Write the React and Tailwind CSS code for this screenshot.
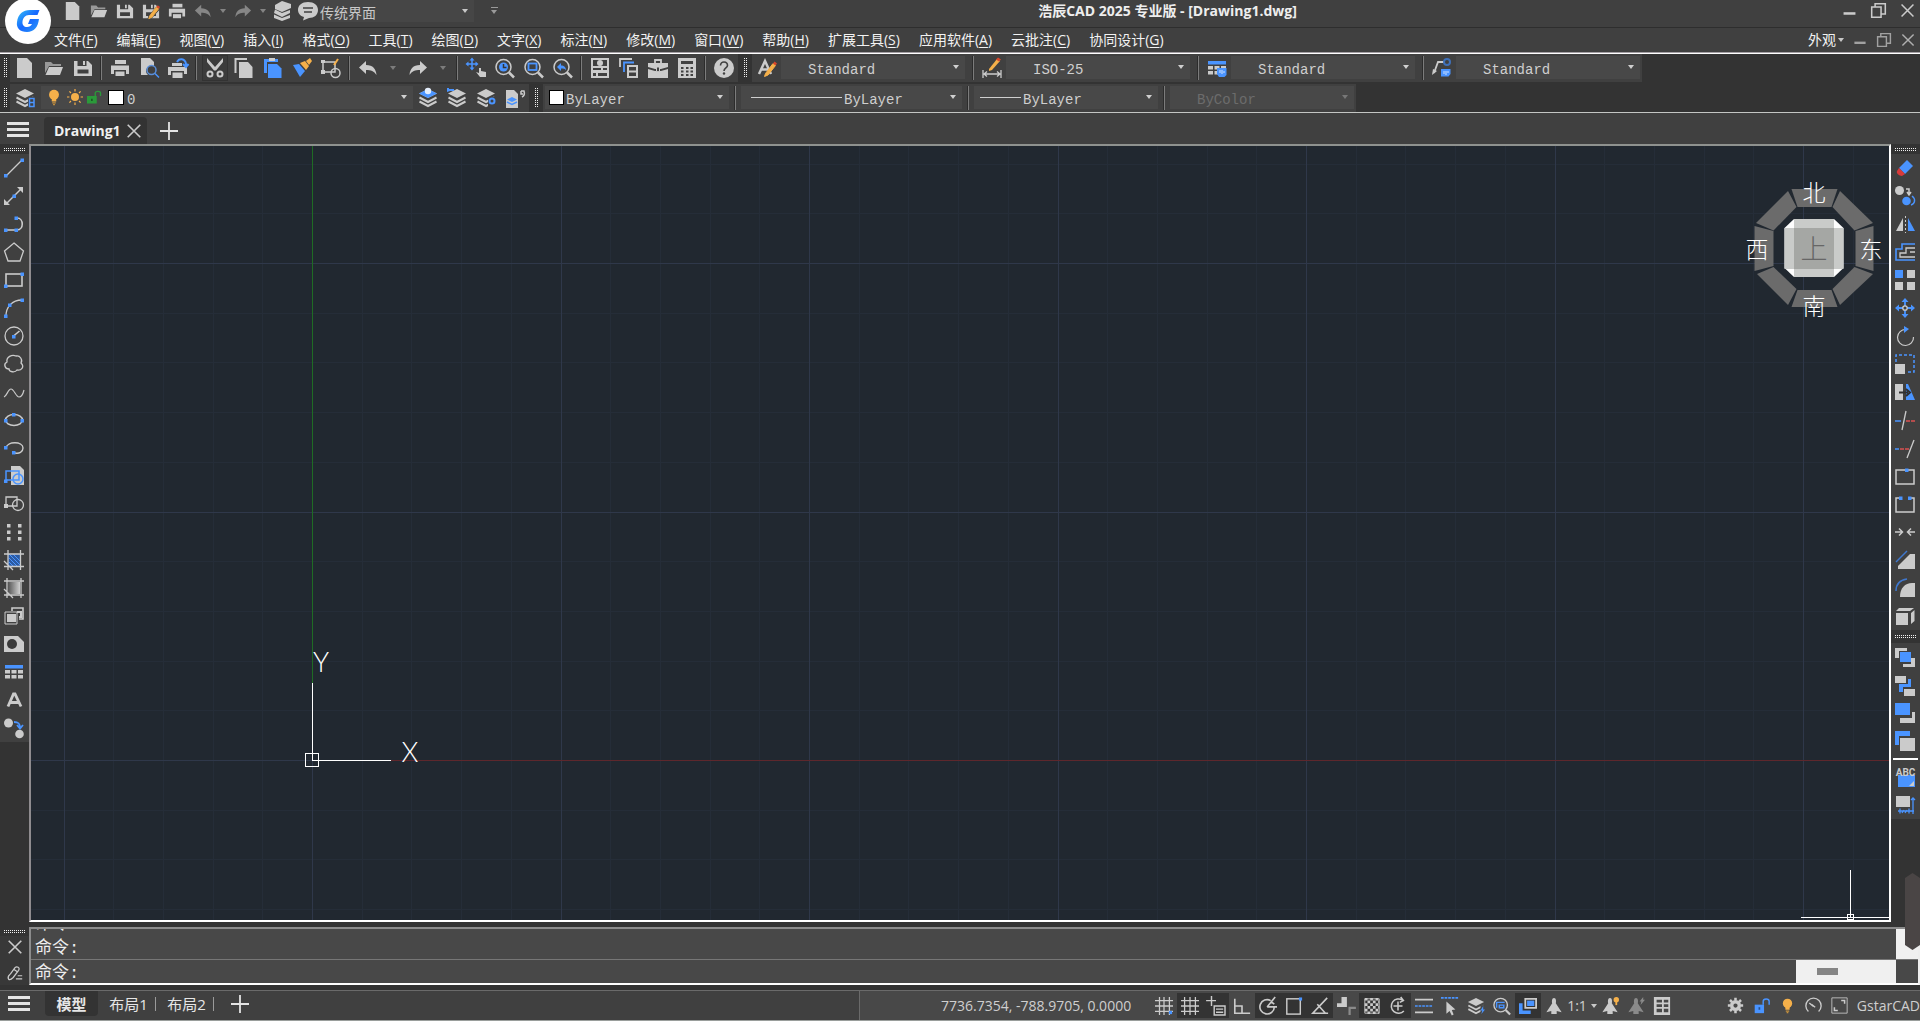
import { useState } from 'react';

const G = '#cbcbcb';
const B = '#4a94ff';
const O = '#f5b04a';

/* ---------- icon drawings, all on a 20x20 grid ---------- */

const stack = (
  <>
    <path d="M10 1l9 4.500-9 4.500-9-4.500z" fill={G} />
    <path d="M1.500 9.500L10 14l8.500-4.500M1.500 13.500L10 18l8.500-4.500" fill="none" stroke={G} strokeWidth="2" />
  </>
);

const doc = <path d="M2 0h10l5 5v15H2z" fill={G} />;
const printer = (
  <>
    <path d="M5 2h11v4H5z" fill={G} />
    <path d="M1 7.500h18V16h-3v-4H4v4H1z" fill={G} />
    <path d="M5.500 13.500h9V18h-9z" fill={G} />
  </>
);
const floppy = (
  <>
    <path d="M1 3h14l4 4v11H1zM4.500 3v5h9V3zM4.500 11.500v4h11v-4z" fill={G} fillRule="evenodd" />
    <path d="M10 3h2v4h-2z" fill={G} />
  </>
);
const folder = (
  <>
    <path d="M1 4h6l2 2h8v2H5L1 15z" fill="#999" />
    <path d="M5 9h14l-3 8H1.500z" fill={G} />
  </>
);
const undo = <path d="M8 3v4c7 0 10 4 10.500 10C16 13 13 12 8 12v4L1 9.500z" fill={G} />;
const redo = <path d="M12 3v4C5 7 2 11 1.500 17 4 13 7 12 12 12v4l7-6.500z" fill={G} />;
const lens = (
  <>
    <circle cx="8.500" cy="9" r="7.500" fill="none" stroke={G} strokeWidth="1.500" />
    <path d="M14 14.500l5 5" stroke={G} strokeWidth="2.500" />
  </>
);
const bulb = (
  <>
    <circle cx="10" cy="7.500" r="5.500" fill={O} />
    <path d="M7.500 11h5v4h-5z" fill={O} />
    <path d="M8 16.500h4M9 18.500h2" stroke="#c9923c" strokeWidth="1.500" />
  </>
);
const dot = (x, y) => <rect key={`${x}-${y}`} x={x - 1.500} y={y - 1.500} width="3.500" height="3.500" fill={B} />;
const tableGrid = (
  <>
    <rect x="1" y="3" width="18" height="3.500" fill={B} />
    {[8, 13].map((y) => [1, 7.500, 14].map((x) => <rect key={`${x}${y}`} x={x} y={y} width="5" height="3.500" fill={G} />))}
  </>
);
const pencil = (
  <>
    <path d="M8.500 15.500L16 5.500l2.500 2L11 17l-3.500 1.500z" fill={O} stroke={O} />
    <path d="M16 5.500l1.500-2 2.500 2-1.500 2z" fill="#d9472b" />
  </>
);
const person = <path d="M10 1c2.500 0 2.500 4 2 6l6.500 10-5.500-1.500V19H7v-3.500L1.500 17 8 7c-.500-2-.500-6 2-6z" fill={G} />;

const ICONS = {
  doc,
  folder,
  floppy,
  printer,
  undo,
  redo,
  stack,
  bulb,
  table: tableGrid,
  saveAs: (<>{floppy}<path d="M7 15.500L16 5l4 3-9 10-5 2z" fill="#404040" />{pencil}</>),
  layers3: (
    <>
      <path d="M10 0l9 3v4l-9 4-7-3V4z" fill={G} />
      <path d="M3 8.500L10 12l8-3v3l-8 4-8-4zM2 13.500L10 17l8-3v3l-8 3-8-3z" fill={G} />
    </>
  ),
  comment: (
    <>
      <path d="M10 1c6 0 10 3 10 8s-4 8-9 8l-6 2.500 1-3.500C2 15 0 12 0 9c0-5 4-8 10-8z" fill={G} />
      <path d="M5 7h10M6 11h8" stroke="#404040" strokeWidth="1.500" />
    </>
  ),
  preview: (
    <>
      <path d="M2 0h9l4 4v5a5 5 0 0 0-6 8H2z" fill={G} />
      <circle cx="12.500" cy="12" r="4.500" fill="#404040" stroke="#5b8fd8" strokeWidth="1.500" />
      <path d="M16 15.500l4 4" stroke={B} strokeWidth="1.500" />
    </>
  ),
  publish: (
    <>
      <path d="M4 5h10v3H4z" fill={G} />
      <path d="M0 9h19v7h-3v-3H3v4H0z" fill={G} />
      <path d="M4.500 14.500h10V20h-10z" fill={G} />
      <path d="M9 4c2-4 8-4 9 2v3M15 6l3 3 2.500-3" fill="none" stroke={B} strokeWidth="2" />
    </>
  ),
  cut: (
    <>
      <path d="M2 0l8 9 8-9v4l-7 8.500H9L2 4z" fill={G} />
      <circle cx="5" cy="16" r="2.500" fill="none" stroke={G} strokeWidth="2" />
      <circle cx="15" cy="16" r="2.500" fill="none" stroke={G} strokeWidth="2" />
    </>
  ),
  copy: (
    <>
      <path d="M1.500 15V1H13" fill="none" stroke={G} strokeWidth="2" />
      <path d="M5 4h9l4.500 5v11H5z" fill={G} />
    </>
  ),
  paste: (
    <>
      <path d="M1 1h14v3H4v11H1z" fill={B} />
      <path d="M6 0h6v3H6z" fill={G} />
      <path d="M5 6h9l4.500 4.500V20H5z" fill={B} />
    </>
  ),
  brush: (
    <>
      <path d="M1 7l6-1 6 7-5 6z" fill={B} />
      <path d="M8 5l5-2 4 5-3 4z" fill={O} />
      <path d="M14 3l4-3 2 3-3 4z" fill={O} />
    </>
  ),
  blockEdit: (
    <>
      <path d="M2 4h12v10H2z" fill="none" stroke={G} strokeWidth="1.500" />
      <circle cx="14.500" cy="15" r="4.500" fill="none" stroke={G} strokeWidth="1.500" />
      <path d="M0 12h4v4H0zM0 2h4v3H0z" fill={G} />
      <path d="M13 7l4-6" stroke={O} strokeWidth="2" />
    </>
  ),
  pan: (
    <>
      <path d="M6 1v10M1 6h10" stroke={B} strokeWidth="1.500" />
      <path d="M6-.500L8.500 2.500h-5zM6 12.500L3.500 9.500h5zM-.500 6L2.500 3.500v5zM12.500 6L9.500 3.500v5z" fill={B} />
      <path d="M13 10v5l-3-1 4 5h6v-5l-5-1v-3z" fill={G} />
    </>
  ),
  zoomRt: (<>{lens}<circle cx="8.500" cy="9" r="4.500" fill={B} /><path d="M8.500 6v3.500h3" fill="none" stroke="#333" strokeWidth="1.500" /></>),
  zoomWin: (<>{lens}<rect x="4.500" y="5.500" width="8" height="6.500" fill="none" stroke={B} strokeWidth="1.800" /></>),
  zoomPrev: (<>{lens}<path d="M8 5v2.500c3 0 5 1.500 5 5-1-2-2.500-2-5-2V13L4 9z" fill={B} /></>),
  props: (
    <>
      <path d="M1 0h18v20H1zM3 2v6h14V2zM3 10v2h14v-2zM3 15v3h14v-3z" fill={G} fillRule="evenodd" />
      <circle cx="10" cy="5" r="3" fill={G} />
      <path d="M11 9h2v5h-2zM6 14h2v5H6z" fill={G} />
    </>
  ),
  centers: (
    <>
      <path d="M1 9V1h12" fill="none" stroke={G} strokeWidth="1.800" />
      <path d="M5 14V4.500h10" fill="none" stroke={B} strokeWidth="1.800" />
      <path d="M8 7h11v13H8zM10 9v3.500h7V9zM10 14.500V18h7v-3.500z" fill={G} fillRule="evenodd" />
    </>
  ),
  toolbox: (
    <>
      <path d="M7 5V2h6v3" fill="none" stroke={G} strokeWidth="1.800" />
      <path d="M0 5h20v4l-7 2h-6L0 9zM0 11l7 2h6l7-2v9H0z" fill={G} />
      <path d="M8.500 9h3v4l-1.500 1-1.500-1z" fill="#404040" stroke={G} />
    </>
  ),
  calc: (
    <>
      <path d="M1 0h18v20H1zM4 3v3h12V3z" fill={G} fillRule="evenodd" />
      {[9, 12.500, 16].map((y) => [4, 9, 13.500].map((x) => <rect key={`${x}${y}`} x={x} y={y} width="2.500" height="2" fill="#404040" />))}
    </>
  ),
  help: (
    <>
      <circle cx="10" cy="10" r="10" fill={G} />
      <path d="M6.500 7.500c0-5 7-4.500 7 0 0 2.500-3.500 2.500-3.500 5.500" fill="none" stroke="#404040" strokeWidth="1.600" />
      <circle cx="10" cy="15.500" r="1.200" fill="#404040" />
    </>
  ),
  textStyle: (
    <>
      <path d="M2 16L8 3l6 13M4 11.500h7" fill="none" stroke={G} strokeWidth="2.500" />
      {pencil}
    </>
  ),
  dimStyle: (
    <>
      <path d="M1 12v8M19 12v8M2 16h16M5 13.500L2 16l3 2.500M15 13.500l3 2.500-3 2.500" fill="none" stroke={G} strokeWidth="1.300" />
      <path d="M7 11l8-10 3 2-8 9-3 1z" fill={O} />
      <path d="M14 1.500l2-2 3 2-2 2z" fill="#d9472b" />
    </>
  ),
  tableStyle: (<>{tableGrid}<path d="M10 10h9.500v7l-2 2H12l-2-3z" fill={B} /><path d="M13 12v3M15 12v4M17 13v2" stroke="#cfe2ff" /></>),
  leaderStyle: (
    <>
      <path d="M2 15L6 4h6" fill="none" stroke={G} strokeWidth="1.800" />
      <path d="M0 17l1-6 4 2z" fill={G} />
      <circle cx="15" cy="4" r="3" fill="none" stroke="#3f70b8" strokeWidth="2" />
      <path d="M9 11h9.500v5l-2 2.500H9z" fill={B} />
      <path d="M12 13v3M14 13v4M16 13v2" stroke="#cfe2ff" />
    </>
  ),
  layerProps: (<>{stack}<path d="M13 9h7v11h-7z" fill="#404040" /><path d="M14.500 10.500h4.500v8h-4.500zM14.500 14.500h4.500" fill="none" stroke={B} strokeWidth="1.500" /></>),
  sun: (
    <>
      <circle cx="10" cy="10" r="5" fill={O} />
      <path d="M10 0v3M10 17v3M0 10h3M17 10h3M3 3l2 2M15 15l2 2M3 17l2-2M15 5l2-2" stroke={O} strokeWidth="1.500" />
    </>
  ),
  unlock: (
    <>
      <path d="M0 8h13v10H0z" fill="#2b9a3a" />
      <path d="M11 8V4c0-3 7-3 7 0v4" fill="none" stroke="#2b9a3a" strokeWidth="1.800" />
      <path d="M5.500 11.500h2v3h-2z" fill="#1c5124" />
    </>
  ),
  layerCur: (<>{stack}<path d="M10 1l9 4.500-9 4.500-9-4.500z" fill={B} /><circle cx="10" cy="3" r="3.200" fill="#e4eefc" /></>),
  layerPrev: (<>{stack}<path d="M0 4V0h2v1h5v2H3z" fill={B} /></>),
  layerMgr: (<>{stack}<path d="M12 9h8v11h-8z" fill="#404040" /><circle cx="16" cy="13" r="2.500" fill="none" stroke={B} strokeWidth="2" /></>),
  layerDoc: (
    <>
      <path d="M1 2h8l4 4v14H1z" fill={G} />
      <path d="M7 9l5 2.500L7 14l-5-2.500z" fill={B} />
      <path d="M2 14l5 2.500 5-2.500" fill="none" stroke={B} strokeWidth="1.500" />
      <path d="M16 3h3c1 3 0 5-2 6M16 3v3h2" fill="none" stroke={G} strokeWidth="1.500" />
    </>
  ),

  line: (<><path d="M2 18L18 2" stroke={G} strokeWidth="1.300" />{dot(1.500, 17.500)}{dot(18, 2)}</>),
  xline: (<><path d="M2 18L18 2" stroke={G} strokeWidth="1.500" /><path d="M13 1h6v6zM0 13v6h6z" fill={G} />{dot(10, 10)}</>),
  pline: (<><path d="M2 16h11c7 0 7-12 0-12" fill="none" stroke={G} strokeWidth="1.600" />{dot(1.500, 16)}{dot(12, 16)}{dot(12, 4)}</>),
  polygon: <path d="M10 1l9.500 8L16 19H4L.500 9z" fill="none" stroke={G} strokeWidth="1.300" />,
  rect: (<><rect x="2" y="4" width="16" height="12" fill="none" stroke={G} strokeWidth="1.600" />{dot(1.500, 16)}{dot(18, 4)}</>),
  arc: (<><path d="M2 18C2 9 8 2 18 2" fill="none" stroke={G} strokeWidth="1.300" />{dot(1.500, 18)}{dot(5.500, 7)}{dot(18, 2)}</>),
  circle: (<><circle cx="10" cy="10" r="9" fill="none" stroke={G} strokeWidth="1.300" /><path d="M9.500 10l6-5" stroke={G} strokeWidth="1.600" />{dot(9.500, 10.500)}</>),
  cloud: <path d="M5 15C1 15-1 10 3 8 2 3 8 0 12 2c4-1 7 4 5 7 4 4 0 8-4 7-2 3-8 2-8-1z" fill="none" stroke={G} strokeWidth="1.300" />,
  spline: <path d="M0 15c3-1 4-8 7-8s5 8 8 8 4-3 5-7" fill="none" stroke={G} strokeWidth="1.200" />,
  ellipse: (<><ellipse cx="10" cy="10" rx="8.500" ry="5.500" fill="none" stroke={G} strokeWidth="1.500" />{dot(1.500, 10.500)}{dot(9.500, 4.500)}{dot(18, 10.500)}</>),
  earc: (<><path d="M2 10c1-7 17-7 17 0 0 4-4 6-8 5" fill="none" stroke={G} strokeWidth="1.400" />{dot(1.500, 9.500)}{dot(9.500, 14.500)}</>),
  insert: (
    <>
      <path d="M7 0h9l4 4v15H7z" fill={G} />
      <path d="M2 5h13v9H2z" fill="none" stroke={B} strokeWidth="1.500" />
      <circle cx="14" cy="13" r="5" fill="none" stroke={B} strokeWidth="1.500" />
      {dot(1.500, 15)}
    </>
  ),
  block: (
    <>
      <path d="M2 3h11v9H2z" fill="none" stroke={G} strokeWidth="1.300" />
      <circle cx="14" cy="11" r="5.500" fill="none" stroke={G} strokeWidth="1.300" />
      <path d="M0 10h4v4H0z" fill={G} />
    </>
  ),
  points: [2, 8.500, 15].map((y) => [3, 14].map((x) => <rect key={`${x}${y}`} x={x} y={y} width="3.500" height="3.500" fill={G} />)),
  hatch: (
    <>
      <path d="M4 4h12v12H4z" fill="#2c5ba3" />
      <path d="M5 8l8 8M5 4l11 11M9 4l7 7M5 12l4 4" stroke={B} />
      <path d="M4 0v20M16.500 0v20M0 4h20M0 16.500h20M0 11l9 9" stroke={G} strokeWidth="1.300" />
    </>
  ),
  gradient: (
    <>
      <defs>
        <linearGradient id="grad">
          <stop offset="0" stopColor="#555" />
          <stop offset="1" stopColor="#d0d0d0" />
        </linearGradient>
      </defs>
      <path d="M4 4h12v12H4z" fill="url(#grad)" />
      <path d="M3 0v20M17 0v20M0 3h20M0 17h20M0 11l9 9" stroke={G} strokeWidth="1.300" />
    </>
  ),
  region: (
    <>
      <path d="M8 5V2h11v11h-4" fill="none" stroke={G} strokeWidth="1.600" />
      <path d="M1 6h12v12H1z" fill="none" stroke={G} />
      <path d="M3 8h9v8H3z" fill={G} />
      <path d="M13 6h4v5h-2" fill="none" stroke={G} strokeWidth="2" />
    </>
  ),
  wipeout: (<><path d="M0 2h14l6 6v10H0z" fill={G} /><circle cx="8" cy="10" r="5" fill="#3a3a3a" /></>),
  mtext: <path d="M4 16.500L9.500 4h1.500L17 16.500M6.500 12.500h8" fill="none" stroke={G} strokeWidth="2.800" />,
  addSel: (
    <>
      <circle cx="4.500" cy="5" r="4.500" fill={G} />
      <circle cx="15.500" cy="16" r="4.300" fill={G} />
      <path d="M10 4c4 0 6 1 6 6M13 7l3 3.500L19 7" fill="none" stroke={B} strokeWidth="1.800" />
    </>
  ),

  eraser: (<><path d="M12 2l6 6-8 8-6-6z" fill={B} /><path d="M4 10l6 6-3 2c-3 0-6-3-5-5z" fill="#d93a3a" /></>),
  copyObj: (
    <>
      <circle cx="4.500" cy="4.500" r="4.500" fill={G} />
      <circle cx="11.500" cy="15" r="4.300" fill={B} />
      <path d="M17 10c4 3 3 8-1 9" fill="none" stroke={B} strokeWidth="1.500" />
      <path d="M11 3h3v5M12 6l2 3 2-3" fill="none" stroke={G} strokeWidth="1.500" />
    </>
  ),
  mirror: (<><path d="M8 4v13H1z" fill={G} /><path d="M13 4v13h7z" fill={B} /><path d="M10.500 2v17" stroke={G} strokeDasharray="2 2" /></>),
  offset: (
    <>
      <path d="M20 2H7v5H1v11h19" fill="none" stroke={B} strokeWidth="1.600" />
      <path d="M20 6h-9v5H5v4h15M20 10h-5" fill="none" stroke={G} strokeWidth="1.300" />
    </>
  ),
  array: (
    <>
      <path d="M0 0h8v8H0z" fill={B} />
      <path d="M12 0h8v8h-8zM0 12h8v8H0zM12 12h8v8h-8z" fill={G} />
    </>
  ),
  move: (
    <>
      <path d="M10 2v16M2 10h16" stroke={B} strokeWidth="1.800" />
      <path d="M10 0l3.500 4h-7zM10 20l3.500-4h-7zM0 10l4-3.500v7zM20 10l-4-3.500v7z" fill={B} />
      <circle cx="10" cy="10" r="2.200" fill="#404040" stroke={G} strokeWidth="1.300" />
    </>
  ),
  rotate: (<><path d="M11 3.500A8 8 0 1 0 18.500 11" fill="none" stroke={G} strokeWidth="1.200" /><path d="M9 0l5 3-5 4z" fill={B} /></>),
  scale: (<><path d="M1 8V1h18v17h-7" fill="none" stroke={B} strokeWidth="1.500" strokeDasharray="3 2" /><path d="M0 10h10v10H0z" fill={G} /></>),
  stretch: (<><path d="M0 2h8v16H0z" fill={G} /><path d="M11 2h2l7 16h-9z" fill={B} /><path d="M4 10.500h9M11 7l4 3.500-4 3.500" fill="none" stroke="#303030" strokeWidth="2" /></>),
  trim: (<><path d="M0 11h6" stroke={B} strokeWidth="1.500" /><path d="M11 11h9" stroke="#d95050" strokeWidth="1.500" strokeDasharray="4 1" /><path d="M7 20l4-19" stroke={G} strokeWidth="1.300" /></>),
  extend: (<><path d="M0 11h4" stroke={B} strokeWidth="1.500" /><path d="M5 11h9" stroke="#d95050" strokeWidth="1.500" strokeDasharray="4 1" /><path d="M12 20l7-18" stroke={G} strokeWidth="1.300" /></>),
  breakPt: (<><rect x="1" y="4" width="18" height="14" fill="none" stroke={G} strokeWidth="1.500" />{dot(11.500, 4)}</>),
  break2: (<><path d="M4 4H1v14h18V4h-3" fill="none" stroke={G} strokeWidth="1.500" />{dot(5.500, 4)}{dot(14.500, 4)}</>),
  join: <path d="M0 10h7M4 6.500L7.500 10 4 13.500M20 10h-7M16 6.500L12.500 10l3.500 3.500" fill="none" stroke={G} strokeWidth="1.500" />,
  chamfer: (<><path d="M3 19v-3L15 4h5v15z" fill={G} /><path d="M1 12L12 1" stroke="#3f78cf" strokeWidth="1.500" /></>),
  fillet: (<><path d="M5 19C5 10 10 5 17 5h3v14z" fill={G} /><path d="M1 13C1 6 5 2 12 1" fill="none" stroke="#3f78cf" strokeWidth="1.500" /></>),
  explode: <path d="M1 7h12v12H1zM4 2h15l-4 3H1zM16 7l3.500-3v11L16 18z" fill={G} />,
  front: (<><path d="M0 1h12v3H4v7H0zM20 20H8v-3h8v-6h4z" fill={G} /><path d="M5 5h11v10H5z" fill={B} /></>),
  under: (<><path d="M0 1h11v7H0zM9 14h11v7H9z" fill={G} /><path d="M13 4h3v8H8v5H4V9h9z" fill={B} /></>),
  above: (<><path d="M0 0h15v12H0z" fill={B} /><path d="M17 9h3v11H5v-5h12z" fill={G} /></>),
  back: (<><path d="M0 0h15v5H4v9H0z" fill={B} /><path d="M5 7h15v13H5z" fill={G} /></>),
  textFront: (
    <>
      <path d="M3 8h17v12H3z" fill={B} />
      <text x="10.500" y="9" textAnchor="middle" fontSize="10" fontWeight="700" fill={G} fontFamily="Roboto, sans-serif">ABC</text>
      <path d="M19 14v5h-5z" fill={G} />
    </>
  ),
  dimFront: (
    <>
      <path d="M1 1h14v11H1z" fill={G} />
      <path d="M18 3v16M16 5l2-2 2 2M3 16h16M5 13.500v5M14 13.500v5M7 18l2-3M10 18l2-3" fill="none" stroke={B} strokeWidth="1.300" />
    </>
  ),

  grid: (<><path d="M5 0v20M10 0v20M16 0v20M0 4h20M0 10h20M0 16h20" stroke={G} strokeWidth="1.400" />{dot(17, 17)}</>),
  snap: <path d="M4 0v20M10 0v20M16 0v20M0 4h20M0 10h20M0 16h20" stroke={G} strokeWidth="1.400" />,
  dyn: <path d="M5-1v11M-1 4h11M8 10h12v10H8zM10 13.500h8M10 17h8" fill="none" stroke={G} strokeWidth="1.600" />,
  ortho: <path d="M2 2v16h17M2 10h8v8" fill="none" stroke={G} strokeWidth="1.800" />,
  polar: <path d="M13 4a8 8 0 1 0 4 7M9 11h11M9 11l9-11M13 5l4 3" fill="none" stroke={G} strokeWidth="1.800" />,
  osnap: (<><rect x="2" y="2" width="15" height="17" fill="none" stroke={G} strokeWidth="1.600" />{dot(17, 2)}</>),
  otrack: <path d="M18 1L2 18h17M7 8l9 10" fill="none" stroke={G} strokeWidth="1.800" />,
  lweight: (<><path d="M5 0h6v11H0V7h5z" fill={G} /><path d="M14 20v-8h7" fill="none" stroke="#8a8a8a" strokeWidth="2.500" /></>),
  checker: (
    <>
      <path d="M2 2h16v16H2z" fill="none" stroke={G} />
      {[2, 5, 8, 11, 14, 17].map((y, i) => <path key={y} d={`M${2 + (i % 2) * 3} ${y + 0.5}H18`} stroke={G} strokeWidth="3" strokeDasharray="3 3" />)}
    </>
  ),
  cycle: <path d="M15 3.500a8 8 0 1 0 1.500 12M10 5v10M5 10h10M13 0l3 4-4 2" fill="none" stroke={G} strokeWidth="1.700" />,
  widths: (<><path d="M0 3h20M0 17h20" stroke={G} strokeWidth="2" /><path d="M0 10h20" stroke={B} strokeWidth="1.800" strokeDasharray="3 1" /></>),
  pick: (<><path d="M0 1h20" stroke={B} strokeWidth="1.800" strokeDasharray="3 1" /><path d="M6 5l10 9-4 .500 2 5-2 1-2.500-5-3.500 3z" fill={G} /></>),
  layerFlash: (<>{stack}<path d="M15 9h5v11h-5z" fill="#484848" /><path d="M18 10l-3 5h2l-1 4 4-5h-2z" fill={B} /></>),
  lensBox: (<>{lens}<path d="M4 12V6h9M7 12V9h5v3z" fill="none" stroke={B} strokeWidth="1.600" /></>),
  chatBox: (<><path d="M6 1h14v12H6zM8 3v8h10V3z" fill={G} fillRule="evenodd" /><path d="M9 4h8v6H9z" fill={B} /><path d="M0 7h4v8h9v4H0z" fill={B} /></>),
  person,
  personOn: (<>{person}<circle cx="17" cy="3" r="3" fill={O} /><path d="M16 5h2v4h-2z" fill={O} /></>),
  personOff: (<g opacity=".5">{person}<path d="M18 0l-4 5h2l-1 4 5-6h-2z" fill={G} /></g>),
  sheet: (<><path d="M1 0h18v20H1zM4 3v3h6V3zM12 3v3h5V3zM4 8v3h6V8zM12 8v3h5V8zM4 13v4h6v-4zM12 13v4h5v-4z" fill={G} fillRule="evenodd" /></>),
  gear: (
    <>
      <circle cx="10" cy="10" r="4.500" fill="none" stroke={G} strokeWidth="4" />
      <path d="M10 1v3M10 16v3M1 10h3M16 10h3M3.500 3.500L6 6M14 14l2.500 2.500M3.500 16.500L6 14M14 6l2.500-2.500" stroke={G} strokeWidth="3" />
    </>
  ),
  blueLock: (<><path d="M2 9h11v10H2z" fill={B} /><path d="M12 9V5c0-3.500 7-3.500 7 0v4" fill="none" stroke={B} strokeWidth="1.700" /><path d="M6.500 12h2v3h-2z" fill="#26508f" /></>),
  gauge: <path d="M4 17A9 9 0 1 1 16 17M10 11L5 7M8 9l4 3" fill="none" stroke={G} strokeWidth="1.600" />,
  full: (<><path d="M1 1h18v18H1z" fill="none" stroke={G} /><path d="M12 4h4v4M8 16H4v-4" fill="none" stroke={G} strokeWidth="1.800" /></>),
  close: <path d="M3 3l14 14M17 3L3 17" stroke={G} strokeWidth="1.800" />,
  pen: (<><path d="M3 17c-2-3 0-4 2-6l5-7c2-2 6 0 4 3l-6 8c-2 2-4 3-5 2zM9 6l4 3" fill="none" stroke={G} strokeWidth="1.400" /><path d="M13 13h5M11 16.500h7" stroke={G} strokeWidth="1.200" /></>),
  plus: <path d="M10 1v18M1 10h18" stroke="#e4e4e4" strokeWidth="1.800" />,
  minimize: <path d="M3 13.500h14" stroke={G} strokeWidth="3" />,
  restore: <path d="M2 6h11v12H2zM6 6V2h12v12h-5" fill="none" stroke={G} strokeWidth="1.800" />,
};

function Icon({ name, className = 'w-5 h-5' }) {
  return (
    <svg viewBox="0 0 20 20" className={`shrink-0 overflow-visible ${className}`} aria-hidden="true">
      {ICONS[name]}
    </svg>
  );
}

function Caret({ className = 'text-[#c8c8c8]' }) {
  return (
    <svg viewBox="0 0 6 4" className={`w-1.5 h-1 shrink-0 ${className}`} aria-hidden="true">
      <path d="M0 0h6L3 4z" fill="currentColor" />
    </svg>
  );
}

function Burger() {
  return (
    <svg viewBox="0 0 22 15" className="w-[22px] h-[15px]" aria-hidden="true">
      <path d="M0 1.500h22M0 7.500h22M0 13.500h22" stroke="#e4e4e4" strokeWidth="3" />
    </svg>
  );
}

function ToolButton({ name, active }) {
  return (
    <button type="button" aria-label={name} className="w-[29px] h-7 shrink-0 flex items-center justify-center">
      {active ? (
        <span className="w-[26px] h-[26px] border border-[#333] bg-[#3c3c3c] flex items-center justify-center">
          <Icon name={name} />
        </span>
      ) : (
        <Icon name={name} />
      )}
    </button>
  );
}

function Separator() {
  return (
    <div className="w-2 flex justify-center shrink-0">
      <div className="w-0.5 h-6 bg-[#7c7c7c] border-l border-[#2c2c2c]" />
    </div>
  );
}

// dotted drag handle standing at the start of a toolbar
function Grip({ className = 'w-2.5' }) {
  return (
    <div className={`h-7 bg-[#333] shrink-0 flex items-center justify-center ${className}`}>
      <svg viewBox="0 0 3 20" className="w-[3px] h-5" shapeRendering="crispEdges" aria-hidden="true">
        <path d="M.5 0v20M2.500 0v20" stroke="#f0f0f0" strokeDasharray="1 1" />
      </svg>
    </div>
  );
}

function GripRow({ className = 'h-2.5' }) {
  return (
    <div className={`bg-[#333] w-full shrink-0 flex items-center justify-center ${className}`}>
      <svg viewBox="0 0 21 3" className="w-[21px] h-[3px]" shapeRendering="crispEdges" aria-hidden="true">
        <path d="M0 .5h21M0 2.500h21" stroke="#f0f0f0" strokeDasharray="1 1" />
      </svg>
    </div>
  );
}

function Combo({ label, value, className = 'w-[184px]', pad = 'pl-[27px]', disabled, children }) {
  return (
    <div className={`relative h-[23px] -mt-0.5 shrink-0 bg-[#484848] ${className}`}>
      {children && <div className="absolute inset-y-0 left-0 flex items-center pointer-events-none">{children}</div>}
      <select
        aria-label={label}
        disabled={disabled}
        className={`appearance-none w-full h-full pb-0.5 bg-transparent font-['Liberation_Mono','Noto_Sans_CJK_SC',monospace] text-[14px] ${disabled ? 'text-[#6c6c6c] opacity-100' : 'text-[#cfcfcf]'} ${pad}`}
      >
        <option>{value}</option>
      </select>
      <div className="absolute inset-y-0 right-1.5 flex items-center pointer-events-none">
        <Caret className={disabled ? 'text-[#777]' : 'text-[#d0d0d0]'} />
      </div>
    </div>
  );
}

const QUICK = ['doc', 'folder', 'floppy', 'saveAs', 'printer'];

const MENUS = [
  ['文件', 'F'], ['编辑', 'E'], ['视图', 'V'], ['插入', 'I'], ['格式', 'O'], ['工具', 'T'],
  ['绘图', 'D'], ['文字', 'X'], ['标注', 'N'], ['修改', 'M'], ['窗口', 'W'], ['帮助', 'H'],
  ['扩展工具', 'S'], ['应用软件', 'A'], ['云批注', 'C'], ['协同设计', 'G'],
];

const DRAW = [
  'line', 'xline', 'pline', 'polygon', 'rect', 'arc', 'circle', 'cloud', 'spline', 'ellipse', 'earc',
  'insert', 'block', 'points', 'hatch', 'gradient', 'region', 'wipeout', 'table', 'mtext', 'addSel',
];

const MODIFY = [
  'eraser', 'copyObj', 'mirror', 'offset', 'array', 'move', 'rotate', 'scale', 'stretch', 'trim',
  'extend', 'breakPt', 'break2', 'join', 'chamfer', 'fillet', 'explode',
];

const STATUS = [
  ['grid'], ['snap', 1], ['dyn', 1], ['ortho'], ['polar', 1], ['osnap', 1], ['otrack', 1], ['lweight'],
  ['checker', 1], ['cycle', 1], ['widths'], ['pick'], ['layerFlash'], ['lensBox'], ['chatBox', 1], ['person'],
];

function TitleBar() {
  return (
    <header className="relative bg-[#404040] shrink-0">
      <button type="button" aria-label="应用程序菜单" className="absolute left-[5px] -top-0.5 z-10 w-[46px] h-[46px] rounded-full bg-white flex items-center justify-center">
        <svg viewBox="0 0 24 24" className="w-6 h-6" aria-hidden="true">
          <defs>
            <linearGradient id="logo" x1="0" y1="0" x2="1" y2="1">
              <stop offset="0" stopColor="#35c3f5" />
              <stop offset=".5" stopColor="#1667ff" />
              <stop offset="1" stopColor="#2b9cf8" />
            </linearGradient>
          </defs>
          <path d="M23.500 1l-2 5H13c-4 0-6 3-6.500 6.500S8 18 11 18c2.500 0 4-1 5-3h-4l2-5h9c-1 8-5 13-12 13C4 23 0 19 1 13 2 5 7 1 14 1z" fill="url(#logo)" />
        </svg>
      </button>

      <div className="h-7 border-b border-[#2e2e2e] flex items-center pl-15 pb-1.5">
        {QUICK.map((n) => (
          <button key={n} type="button" aria-label={n} className="w-[26px] h-full flex items-center justify-center">
            <Icon name={n} className="w-[18px] h-[18px]" />
          </button>
        ))}
        <div className="flex items-center gap-2 ml-1 opacity-50">
          <Icon name="undo" className="w-[18px] h-[18px]" />
          <Caret />
          <Icon name="redo" className="w-[18px] h-[18px]" />
          <Caret />
        </div>
        <div className="flex items-center gap-1.5 ml-1.5 mr-0.5">
          <Icon name="layers3" />
          <Icon name="comment" />
        </div>
        <div className="relative w-[154px] h-[22px] bg-[#464646]">
          <select aria-label="工作空间" className="appearance-none w-full h-full pb-0.5 bg-transparent text-[14px] leading-5 text-[#c8c8c8]">
            <option>传统界面</option>
          </select>
          <div className="absolute inset-y-0 right-1.5 flex items-center pointer-events-none"><Caret /></div>
        </div>
        <button type="button" aria-label="自定义" className="ml-4 flex flex-col items-center gap-0.5 w-2">
          <span className="w-[7px] h-px bg-[#9a9a9a]" />
          <Caret className="text-[#9a9a9a]" />
        </button>
        <h1 className="flex-1 pr-1 text-center text-[14px] leading-5 font-bold text-[#eee]">浩辰CAD 2025 专业版 - [Drawing1.dwg]</h1>
        <div className="flex items-center gap-3 pr-1">
          <button type="button" aria-label="最小化"><Icon name="minimize" className="w-[17px] h-[17px]" /></button>
          <button type="button" aria-label="还原"><Icon name="restore" className="w-[17px] h-[17px]" /></button>
          <button type="button" aria-label="关闭"><Icon name="close" className="w-[17px] h-[17px]" /></button>
        </div>
      </div>

      <nav className="h-6 flex items-center pl-[54px] pr-1 gap-[19px] text-[14px] leading-5 text-[#f2f2f2]">
        {MENUS.map(([label, key]) => (
          <button key={key} type="button" className="whitespace-nowrap">
            {label}(<span className="underline underline-offset-2">{key}</span>)
          </button>
        ))}
        <div className="ml-auto flex items-center gap-2">
          <button type="button" className="flex items-center gap-0.5">外观<Caret /></button>
          <button type="button" aria-label="最小化文档" className="opacity-70"><Icon name="minimize" className="w-4 h-4" /></button>
          <button type="button" aria-label="还原文档" className="opacity-70"><Icon name="restore" className="w-4 h-4" /></button>
          <button type="button" aria-label="关闭文档" className="opacity-80"><Icon name="close" className="w-4 h-4" /></button>
        </div>
      </nav>
      <div className="h-0.5 bg-white border-t border-[#a5a0a5]" />
    </header>
  );
}

function Toolbars() {
  const tools = (names) => names.map((n) => <ToolButton key={n} name={n} active={n === 'cut'} />);
  return (
    <div className="bg-[#333] border-b border-[#c4c6c4] shrink-0 flex flex-col gap-0.5 items-start">
      <div className="h-7 bg-[#404040] flex items-center pr-0.5">
        <Grip />
        {tools(['doc', 'folder', 'floppy'])}
        <Separator />
        {tools(['printer', 'preview', 'publish'])}
        <Separator />
        {tools(['cut', 'copy', 'paste', 'brush', 'blockEdit'])}
        <Separator />
        {tools(['undo'])}
        <div className="w-[21px] flex justify-center"><Caret className="text-[#7c7c7c]" /></div>
        {tools(['redo'])}
        <div className="w-[21px] flex justify-center"><Caret className="text-[#7c7c7c]" /></div>
        <Separator />
        {tools(['pan', 'zoomRt', 'zoomWin', 'zoomPrev'])}
        <Separator />
        {tools(['props', 'centers', 'toolbox', 'calc'])}
        <Separator />
        {tools(['help'])}
        <Grip className="w-3.5" />
        {tools(['textStyle'])}
        <Combo label="文字样式" value="Standard" />
        <div className="w-1" />
        <Separator />
        {tools(['dimStyle'])}
        <Combo label="标注样式" value="ISO-25" />
        <div className="w-1" />
        <Separator />
        {tools(['tableStyle'])}
        <Combo label="表格样式" value="Standard" />
        <div className="w-1" />
        <Separator />
        {tools(['leaderStyle'])}
        <Combo label="多重引线样式" value="Standard" />
      </div>

      <div className="h-7 bg-[#404040] flex items-center pr-0.5">
        <Grip />
        {tools(['layerProps'])}
        <Combo label="图层" value="0" className="w-[372px] ml-0.5" pad="pl-[86px]">
          <div className="flex items-center gap-1 pl-1">
            <Icon name="bulb" className="w-[18px] h-[18px]" />
            <Icon name="sun" className="w-[16px] h-[16px]" />
            <Icon name="unlock" className="w-[15px] h-[15px]" />
            <span className="w-4 h-[15px] ml-0.5 bg-white border border-black" />
          </div>
        </Combo>
        {tools(['layerCur', 'layerPrev', 'layerMgr', 'layerDoc'])}
        <Grip className="w-3.5" />
        <div className="flex items-center gap-0.5 pl-0.5">
          <Combo label="颜色" value="ByLayer" pad="pl-[21px]">
            <span className="w-[15px] h-[15px] ml-1 bg-white border border-black" />
          </Combo>
          <Separator />
          <Combo label="线型" value="ByLayer" className="w-[221px]" pad="pl-[103px]">
            <span className="w-[91px] h-px ml-2.5 bg-[#cfcfcf]" />
          </Combo>
          <Separator />
          <Combo label="线宽" value="ByLayer" pad="pl-[49px]">
            <span className="w-[41px] h-px ml-1.5 bg-[#cfcfcf]" />
          </Combo>
          <Separator />
          <Combo label="打印样式" value="ByColor" disabled />
        </div>
      </div>
    </div>
  );
}

function Tabs() {
  return (
    <div className="h-[31px] bg-[#404040] shrink-0 flex items-end">
      <button type="button" aria-label="文档菜单" className="w-11 h-full pl-[7px] pt-0.5 flex items-center"><Burger /></button>
      <div className="h-[27px] bg-[#333] rounded-t pl-2.5 pr-1 flex items-center gap-1 text-[14px] leading-5 font-bold text-[#f0f0f0]">
        <span>Drawing1</span>
        <button type="button" aria-label="关闭 Drawing1"><Icon name="close" className="w-[18px] h-[18px]" /></button>
      </div>
      <button type="button" aria-label="新建图形" className="h-[27px] ml-3 flex items-center"><Icon name="plus" /></button>
    </div>
  );
}

// world origin on the canvas and distance between the fine grid lines
const ORIGIN = { x: 281, y: 614 };
const STEP = 49.7;
const gridX = Array.from({ length: 80 }, (_, i) => i - 5);
const gridY = Array.from({ length: 60 }, (_, i) => i - 12);

function Compass() {
  return (
    <svg viewBox="-75 -75 150 150" className="absolute top-[27px] right-0 w-[150px] h-[150px]">
      <g fill="#6b6b6b">
        <path d="M-22.500-59h46l-6 18h-34z" />
        <path d="M26-57l33 32-18.500 7.500L18.500-41z" />
        <path d="M59.500-22v45l-18-5v-35z" />
        <path d="M59 26L26 57l-7.500-16L40.500 19z" />
        <path d="M-22.500 59h46l-6-17h-34z" />
        <path d="M-26 57l-31-31 16.500-7 23 22z" />
        <path d="M-59.500-22v45l19-5v-35z" />
        <path d="M-58-25l32-32 8.500 16-23 23.500z" />
      </g>
      <path d="M-20-29h40l9.500 9v40L20 29h-40l-9.500-9v-40z" fill="#fdfdfd" />
      <path d="M-20-29h40v58h-40z" fill="#c9cbc9" />
      <path d="M-29.500-20h59v41h-59z" fill="#c9cbc9" />
      <path d="M-20-20h40v41h-40z" fill="#a5a7a4" />
      <g textAnchor="middle" fontFamily="'Noto Sans CJK SC', sans-serif" fontWeight="300" fontSize="23" fill="#fff">
        <text x="0" y="-47">北</text>
        <text x="-57" y="10">西</text>
        <text x="57" y="10">东</text>
        <text x="0" y="67">南</text>
        <text x="0" y="11" fontSize="27" fill="#666">上</text>
      </g>
    </svg>
  );
}

function Canvas() {
  return (
    <main className="relative flex-1 min-w-0 overflow-hidden bg-[#212830] border-2 border-t-[#8f928f] border-l-[#8f8c8f] border-r-white border-b-white">
      <svg className="absolute inset-0 w-full h-full">
        <g shapeRendering="crispEdges">
          {[false, true].map((major) => (
            <g key={String(major)} fill={major ? '#2f384a' : '#252d38'}>
              {gridX.filter((i) => (i % 5 === 0) === major).map((i) => (
                <rect key={i} x={Math.round(ORIGIN.x + i * STEP)} y="0" width="1" height="100%" />
              ))}
              {gridY.filter((i) => (i % 5 === 0) === major).map((i) => (
                <rect key={i} x="0" y={Math.round(ORIGIN.y + i * STEP)} width="100%" height="1" />
              ))}
            </g>
          ))}
          <rect x={ORIGIN.x} y="0" width="1" height={ORIGIN.y} fill="#1f6b24" />
          <rect x={ORIGIN.x} y={ORIGIN.y} width="100%" height="1" fill="#5e272c" />
          <g fill="none" stroke="#fff">
            <path d={`M${ORIGIN.x + 0.5} ${ORIGIN.y}v-77M${ORIGIN.x} ${ORIGIN.y + 0.5}h79`} />
            <rect x={ORIGIN.x - 6.5} y={ORIGIN.y - 6.5} width="13" height="13" />
          </g>
        </g>
        <g fill="#fff" fontFamily="Lato, sans-serif" fontWeight="300" fontSize="27" textAnchor="middle">
          <text x="290" y="526">Y</text>
          <text x="379" y="616">X</text>
        </g>
      </svg>
      <Compass />
      {/* crosshair cursor */}
      <svg viewBox="0 0 88 52" className="absolute right-0 bottom-0 w-[88px] h-[52px]" shapeRendering="crispEdges">
        <path d="M49.500 2v48M0 49.500h88" stroke="#fff" />
        <path d="M46.500 46.500h6v5h-6z" fill="none" stroke="#fff" />
      </svg>
    </main>
  );
}

function SideTools({ names }) {
  return (
    <div className="bg-[#404040] flex flex-col gap-2 py-1 pl-1">
      {names.map((n) => (
        <button key={n} type="button" aria-label={n} className="w-5 h-5"><Icon name={n} /></button>
      ))}
    </div>
  );
}

function CommandLine() {
  return (
    <section className="relative shrink-0 flex">
      <div className="w-[29px] bg-[#383838] flex flex-col items-center">
        <GripRow className="h-[9px]" />
        <button type="button" aria-label="关闭命令行" className="mt-0.5"><Icon name="close" className="w-[18px] h-[18px]" /></button>
        <button type="button" aria-label="命令行设置" className="mt-2"><Icon name="pen" className="w-[18px] h-[18px]" /></button>
      </div>
      <div className="flex-1 border-2 border-t-[#8c8c8c] border-l-[#8c8c8c] border-r-[#eee] border-b-white bg-[#484848] text-[17px] leading-5 text-[#eee] font-['Liberation_Mono','Noto_Sans_CJK_SC',monospace]">
        <div className="h-[31px] flex border-b border-[#767676]">
          <div className="flex-1 flex flex-col justify-end overflow-hidden pl-1">
            <p className="pt-1">命令:</p>
            <p className="pt-1">命令:</p>
          </div>
          <div className="w-[22px] bg-[#f0f0f0]" />
        </div>
        <div className="h-[23px] flex items-stretch">
          <label htmlFor="cmd" className="pl-1 pt-1">命令:</label>
          <input id="cmd" type="text" className="flex-1 min-w-0 bg-transparent outline-none pl-1" />
          <div className="w-[100px] bg-[#f0f0f0] flex items-center pl-[21px]">
            <div className="w-[21px] h-[7px] bg-[#858585]" />
          </div>
          <div className="w-[22px]" />
        </div>
      </div>
      <svg viewBox="0 0 15 77" className="absolute right-0 -top-[54px] z-10 w-[15px] h-[77px]" aria-hidden="true">
        <path d="M0 5l7.500-5L15 5v67l-7.500 5L0 72z" fill="#4a4545" />
      </svg>
    </section>
  );
}

function StatusBar() {
  const [layout, setLayout] = useState('模型');
  return (
    <footer className="h-[31px] shrink-0 flex items-center bg-[#484848] border-t border-[#6a6a6a] border-b border-b-[#9a9e9c] text-[14px] leading-5 text-[#e6e6e6]">
      <div className="w-[860px] h-full bg-[#404040] border-r border-[#6a6a6a] flex items-start">
        <button type="button" aria-label="布局菜单" className="w-[45px] h-[25px] pl-2 flex items-center"><Burger /></button>
        {['模型', '布局1', '布局2'].map((name) => (
          <div key={name} className="h-[25px] flex items-center">
            <button
              type="button"
              onClick={() => setLayout(name)}
              className={`h-full text-[15px] ${layout === name ? 'w-[53px] bg-[#333] rounded-b font-bold' : 'w-[57px] pl-1'}`}
            >
              {name}
            </button>
            {name !== '模型' && <span className="w-px h-3.5 bg-[#9a9a9a]" />}
          </div>
        ))}
        <button type="button" aria-label="新建布局" className="ml-4 h-[25px] flex items-center"><Icon name="plus" /></button>
      </div>
      <div className="flex-1 flex justify-end items-center h-full">
        <span className="pr-5 text-[#cfcfcf]">7736.7354, -788.9705, 0.0000</span>
        {STATUS.map(([name, on]) => (
          <button key={name} type="button" aria-label={name} className={`w-[26px] h-[25px] flex items-center justify-center ${on ? 'bg-[#333]' : ''}`}>
            <Icon name={name} className="w-[18px] h-[18px]" />
          </button>
        ))}
        <button type="button" className="flex items-center gap-1 text-[#cfcfcf]">1:1<Caret /></button>
        {['personOn', 'personOff', 'sheet'].map((name) => (
          <button key={name} type="button" aria-label={name} className="w-[26px] h-[25px] flex items-center justify-center">
            <Icon name={name} className="w-[18px] h-[18px]" />
          </button>
        ))}
        <div className="flex pl-12">
          {['gear', 'blueLock', 'bulb', 'gauge', 'full'].map((name) => (
            <button key={name} type="button" aria-label={name} className="w-[26px] h-[25px] flex items-center justify-center">
              <Icon name={name} className="w-[17px] h-[17px]" />
            </button>
          ))}
        </div>
        <span className="pl-1 text-[#cfcfcf]">GstarCAD</span>
      </div>
    </footer>
  );
}

export default function App() {
  return (
    <div className="h-screen overflow-hidden flex flex-col bg-[#333] font-['Open_Sans','Noto_Sans_CJK_SC',sans-serif]">
      <TitleBar />
      <Toolbars />
      <Tabs />
      <div className="flex-1 min-h-0 flex mb-[5px]">
        <aside className="w-[29px] shrink-0">
          <GripRow />
          <SideTools names={DRAW} />
        </aside>
        <Canvas />
        <aside className="w-[29px] shrink-0">
          <GripRow />
          <SideTools names={MODIFY} />
          <GripRow className="h-[13px]" />
          <SideTools names={['front', 'under', 'above', 'back']} />
          <div className="bg-[#404040] px-0.5 py-[3px]"><div className="h-0.5 bg-white" /></div>
          <SideTools names={['textFront', 'dimFront']} />
        </aside>
      </div>
      <CommandLine />
      <div className="h-[5px] shrink-0" />
      <StatusBar />
    </div>
  );
}
